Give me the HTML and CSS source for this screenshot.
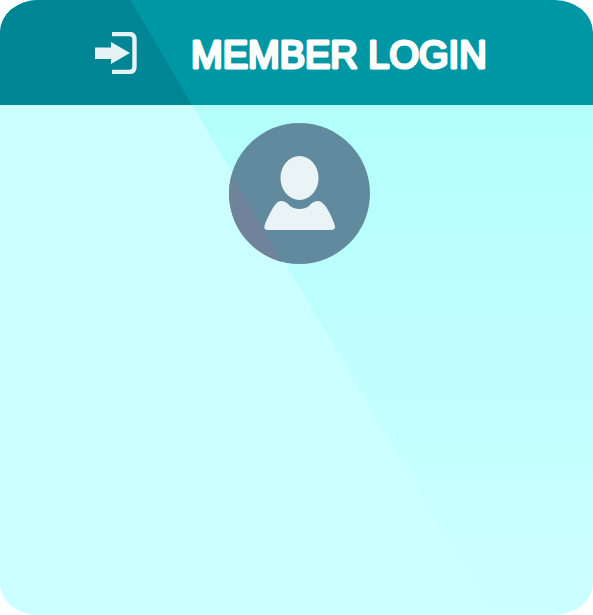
FILE: index.html
```html
<!DOCTYPE html>
<html lang="en">
<head>
<meta charset="utf-8">
<meta name="viewport" content="width=device-width, initial-scale=1">
<title>Member Login</title>
<link rel="stylesheet" href="styles.css">
</head>
<body>
<main class="card">
  <header class="card-header">
    <svg class="login-icon" viewBox="0 0 42 42" aria-hidden="true">
      <path d="M17 2H34Q39.500 2 39.500 7.500V34.500Q39.500 40 34 40H17" fill="none" stroke="#e5f3f5" stroke-width="4.400"/>
      <path d="M0 15.500H16V10L35 21L16 32V27H0Z" fill="#e5f3f5"/>
    </svg>
    <h1 class="title">
      <svg class="title-art" viewBox="0 0 298 44">
        <text class="title-text" x="0" y="37">MEMBER LOGIN</text>
      </svg>
    </h1>
  </header>
  <section class="card-body">
    <svg class="avatar" viewBox="0 0 141 141" role="img" aria-label="Member">
      <defs>
        <clipPath id="disc"><circle cx="70.500" cy="70.500" r="70.500"/></clipPath>
      </defs>
      <g clip-path="url(#disc)">
        <rect width="141" height="141" fill="#628a9f"/>
        <path d="M0 48L54 141H0Z" fill="#70839b"/>
      </g>
      <ellipse cx="70.500" cy="55" rx="19" ry="22" fill="#eaf4f7"/>
      <path d="M50 78.500C55 77 58 80 61 83C66 87 75 87 80 83C83 80 86 77 91 78.500C97 80 105 98 106 103Q106.500 107 102 107H39Q34.500 107 35.500 103C37 98 45 80 50 78.500Z" fill="#eaf4f7"/>
    </svg>
  </section>
</main>
</body>
</html>
```
FILE: styles.css
```css
* {
  box-sizing: border-box;
}

body {
  margin: 0;
  background: #fff;
  font-family: "Liberation Sans", Arial, sans-serif;
}

.card {
  position: relative;
  display: flex;
  flex-direction: column;
  min-height: 100vh;
  overflow: hidden;
  border-radius: 38px / 32px;
  background: linear-gradient(#b0fffb, #b3fffc 17%, #ccffff);
}

/* Diagonal sheen across the whole card */
.card::before {
  content: "";
  position: absolute;
  inset: 0;
  background: #ccffff;
  clip-path: polygon(0 0, 22% 0, 83% 100%, 0 100%);
}

.card-header {
  position: relative;
  display: flex;
  align-items: center;
  justify-content: center;
  gap: 54px;
  height: 105px;
  padding-right: 10px;
  overflow: hidden;
  border-radius: 38px 38px 0 0 / 32px 32px 0 0;
  background: #0097a5;
}

.card-header::before {
  content: "";
  position: absolute;
  inset: 0;
  background: #008595;
  clip-path: polygon(0 0, 22% 0, 32.4% 100%, 0 100%);
}

.login-icon {
  position: relative;
  flex: none;
  width: 42px;
  height: 42px;
}

.title {
  position: relative;
  margin: 0;
  font-size: 38px;
  font-weight: 400;
}

.title-art {
  display: block;
  width: 298px;
  height: 44px;
  overflow: visible;
}

/* Round joins soften the corners of the letters */
.title-text {
  fill: #fff;
  stroke: #fff;
  stroke-width: 3px;
  stroke-linejoin: round;
}

.card-body {
  position: relative;
  display: flex;
  justify-content: center;
  flex: 1;
  padding: 18px 0 18px 6px;
}

.avatar {
  width: 141px;
  height: 141px;
}
```
